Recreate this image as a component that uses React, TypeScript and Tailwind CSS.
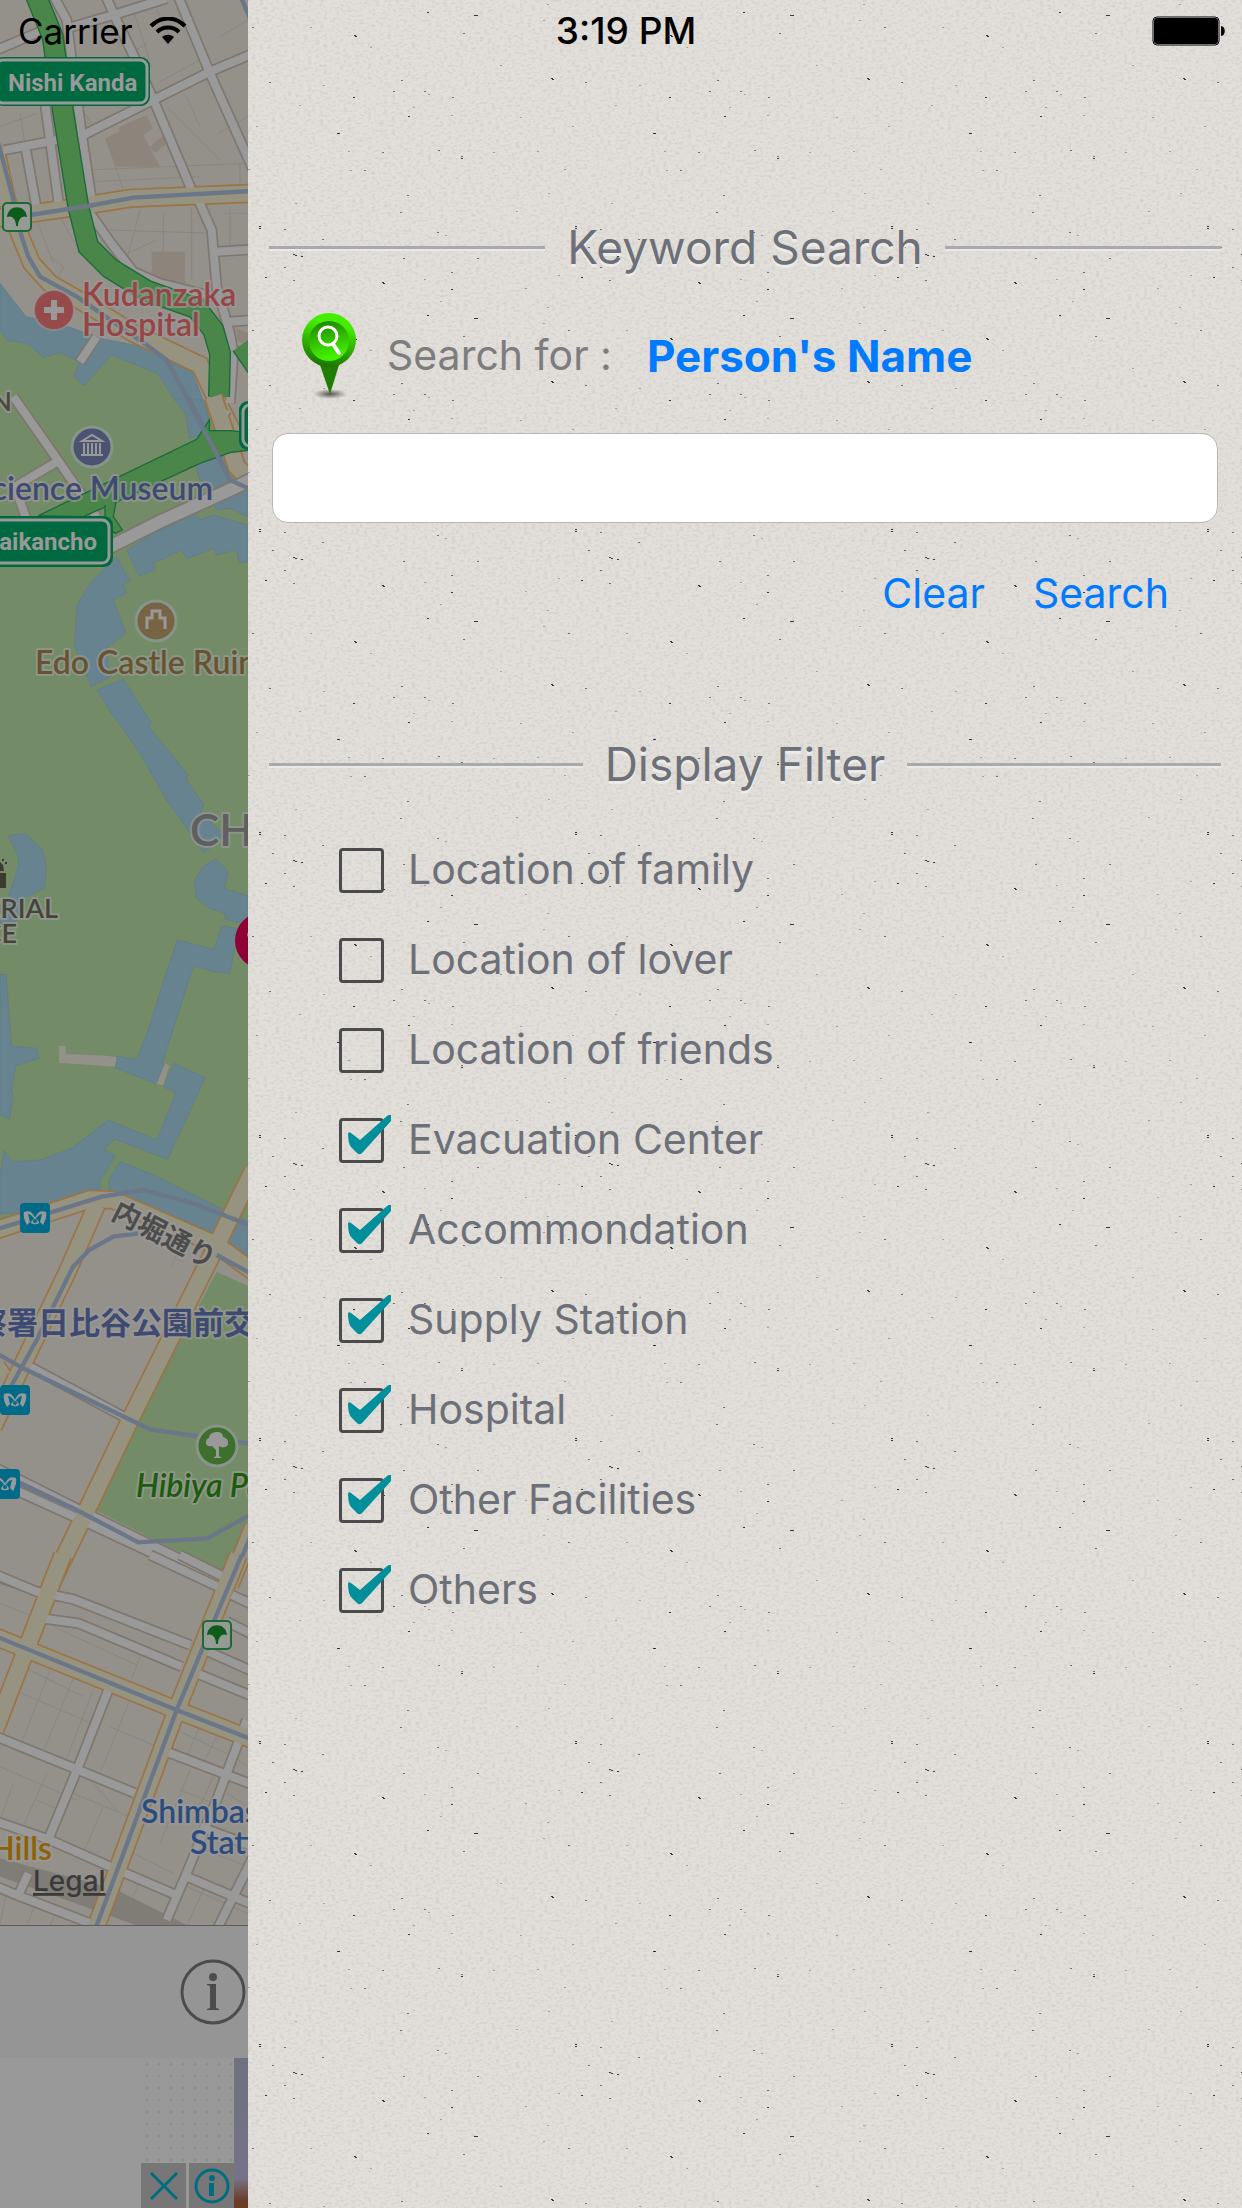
import React, { useState } from "react";

interface MapSection {
  y: number;
  park?: string[];
  water?: string[];
  land?: string[];
  building?: string[];
  street?: string[];
  avenue?: string[];
  highway?: string[];
  parcel?: string[];
  rail?: string[];
}

// Map shapes are drawn on a 744 x 5775 grid, three units to a pixel.
const sections: MapSection[] = [
  {
    y: 0,
    park: ["M0 980L20 1015 85 1030 130 1070 180 1055 240 1080 335 1060 472 1118 600 1190V1300H0z"],
    water: [
      "M0 850L78 950 165 965 300 1015 430 1040 500 1080 575 1110 610 1200 630 1260 600 1310 570 1320 555 1240 525 1200 472 1120 335 1065 252 1157 222 1130 238 1085 180 1058 130 1073 85 1032 20 1020 0 990z",
    ],
    building: [
      "M315 415L358 395 358 380 440 345 458 385 430 405 480 500 400 500 350 500z",
      "M455 755H555V855L455 835z",
      "M450 440L490 405 500 430 465 460z",
      "M710 985L744 1000V1040L710 1020z",
    ],
    parcel: [
      "M400 30L455 200M375 50L470 20M350 190L440 130M480 245L600 180M660 110L744 60M470 30L520 130M260 510L744 490M280 545L600 530M110 660L160 790M330 690L640 700M420 630L380 780M490 640V760M340 780L470 720M575 620V840M690 620V740M655 400L744 350M500 320L660 480M560 290L600 380M320 420L370 570M0 380L110 340M60 340L75 430M720 490V550M180 650L230 740M150 770L190 800 165 860M670 640L744 640M255 340L290 400",
    ],
    street: [
      "M-10 150L120 95",
      "M200 85L340 45 500 -5",
      "M318 -10L345 50 400 165 465 310 575 570",
      "M535 -10L630 220 760 510",
      "M760 160L630 215 460 300 230 415",
      "M-10 455L170 420",
      "M78 450L108 615",
      "M135 310L176 610",
      "M162 -10L200 60 215 180 248 420 275 600",
      "M595 600L635 690 650 860 690 1000 700 1060 690 1210",
      "M650 755L760 748",
      "M270 640L330 725 400 815 480 850 640 890",
      "M690 965L760 960",
      "M700 1055H760",
      "M630 1155L690 1150",
      "M290 1010L240 1085",
    ],
    avenue: [
      "M-10 655L200 625 390 595 760 580",
      "M-15 440L20 600 62 710 95 790 150 850 280 925 400 1000 600 1095 640 1180 700 1300",
    ],
    highway: ["M105 -20L158 110 190 340 235 620 265 740 330 805 440 872 590 925 640 990 660 1060 657 1190", "M725 1035L770 1100"],
    rail: ["M-5 430L40 600 65 710 85 770 120 830 230 890 440 1035 500 1080 570 1210", "M90 645L265 618 400 593 760 573", "M722 -10L750 55"],
  },
  {
    y: 1200,
    park: ["M0 0H610L744 255V2620H0z"],
    water: [
      "M525 0L555 40 570 115 600 105 628 60 610 0z",
      "M585 190L600 240 650 262 690 240 670 150z",
      "M640 310L744 270V350L690 325 650 330z",
      "M380 450L460 400 585 340 603 360 640 345 744 375V485L718 488 710 450 650 465 640 445 560 477 545 450 460 490 466 510 417 528z",
      "M350 470L390 545 368 555 380 578 340 600 378 700 318 745 330 830 275 860 223 735 230 620 270 550z",
      "M290 870L370 838 455 970 445 978 520 1070 565 1125 558 1137 612 1215 600 1235 672 1305 612 1358 500 1200 420 1060 335 940z",
    ],
    street: ["M40 -10L180 190 290 350", "M180 180L45 260 80 360", "M680 30L660 60"],
    avenue: ["M640 -10L710 200 760 250"],
    rail: ["M565 -10L690 240 760 272"],
  },
  {
    y: 2400,
    water: [
      "M25 107L75 100 128 150 140 205 133 265 70 295 45 370H0L25 290 55 200V170z",
      "M647 177L685 215 673 265 744 288V375L676 357V340L628 325 588 293 583 243 608 200z",
      "M665 378L715 385 690 520 640 515 580 498 487 790 495 795 470 852 345 803 350 768 410 778 445 690 495 530 532 420 642 448z",
      "M523 790L616 833 503 1078 345 1017 312 1048 345 1067 300 1145V1240H0V1130L12 1052 38 1085 120 1080 215 1045 325 960 470 1020 528 880 490 860z",
      "M0 523H18L35 738 110 745 117 775 47 798 35 870 40 890 28 958 0 945z",
      "M360 1085L450 1120 600 1195 744 1265V1380L640 1320 327 1200V1140z",
    ],
    land: ["M177 738H197V762L320 767 350 772 345 800 177 788z", "M495 790L508 797 490 855 470 852z"],
  },
  {
    y: 3540,
    land: ["M-10 150L270 60 340 60 650 215 744 280V1250H-10z"],
    park: ["M650 275L744 318V1030L670 1182 275 985z"],
    parcel: ["M530 225L513 260"],
    street: ["M90 560L380 715", "M-10 865L240 990 700 1215", "M-10 905L240 1018 660 1215", "M-10 1190L60 1215"],
    avenue: ["M760 -30L628 240 395 710 150 1220", "M-10 150L270 58 340 60 650 195 760 275", "M290 75L200 280 60 570 -20 740", "M-10 560L10 590", "M760 1040L690 1215"],
    rail: [
      "M-10 148L305 50 430 30 580 70 760 140",
      "M415 160L340 170 268 210 218 262 110 480 30 625",
      "M650 225L760 285",
      "M-10 520L70 565 450 748 760 793",
      "M-10 875L230 990 415 1087 620 1075 760 1000",
      "M760 1050L690 1215",
    ],
  },
  {
    y: 4680,
    park: ["M590 0H690L665 42z"],
    building: ["M0 895L130 930 340 985 570 1100H420L200 1020 0 950z"],
    parcel: [
      "M0 130L110 175M160 200L410 315M420 290L395 355M70 320L250 410M150 330L60 560M220 355L120 600M280 390L190 620M40 390L300 500M330 500L470 560M390 420L300 640M0 620L230 720M140 640L60 820M40 670L0 780M220 700L390 770M310 740L240 900M110 720L200 760M530 510L700 590M600 500L560 590M650 530L610 610M570 630L480 850M640 650L580 780M380 870L520 940M450 740L390 900M700 590L744 620M20 1000L0 1090M110 1020L80 1098M170 1050L150 1098M560 980L744 1060M610 990L560 1098M430 940L390 1030M540 690L640 730M280 670L350 750M590 860L744 920M680 700L744 740",
    ],
    street: [
      "M-10 45L110 95 220 118 570 255",
      "M125 175L235 190 545 320",
      "M450 -15L665 85",
      "M540 -15L680 55",
      "M695 105L760 135",
      "M680 185L760 225",
      "M625 275L760 335",
      "M590 340L760 410",
      "M325 390L235 620 140 850",
      "M-10 530L235 630 405 700",
      "M-10 785L150 840 330 920 540 1010",
      "M500 575L760 675",
      "M740 480L650 720 560 940 500 1080",
      "M560 950L760 1035",
      "M760 890L650 1110",
      "M-10 980L50 1005 270 1090",
      "M55 1005L85 940",
      "M600 800L760 860",
    ],
    avenue: ["M188 -15L20 420 -15 510", "M-10 232L530 450 760 540", "M715 -15L530 450 400 800 285 1110"],
    rail: ["M-10 230L530 450 760 540", "M725 -15L530 450 285 1110"],
  },
];

const Paths: React.FC<{ list?: string[]; className: string }> = ({ list = [], className }) => (
  <>
    {list.map((d, i) => (
      <path key={i} d={d} className={className} />
    ))}
  </>
);

const MetroIcon: React.FC<{ x: number; y: number }> = ({ x, y }) => (
  <g transform={`translate(${x} ${y})`}>
    <rect width="30" height="30" rx="4" className="fill-[#006b88]" />
    <path d="M4 9C9 7 12 9 14 13L19 19C20 22 10 22 11 19L16 13C18 9 21 7 26 9C27 14 25 18 23 22L20 19 22 11C18 11 18 15 15 15C12 15 12 11 8 11L10 19 7 22C5 18 3 14 4 9z" className="fill-[#999]" />
    <circle cx="15" cy="18" r="2" className="fill-[#006b88]" />
  </g>
);

const GinkgoIcon: React.FC<{ x: number; y: number }> = ({ x, y }) => (
  <g transform={`translate(${x} ${y})`}>
    <rect x="1" y="1" width="28" height="28" rx="4" className="fill-[#959a94] stroke-[#1b6a35] stroke-2" />
    <path d="M5 15C6 2 24 2 25 15C21 13 16 16 16 24H14C14 16 9 13 5 15z" className="fill-[#0e5c1c]" />
  </g>
);

const mapLabel = "[paint-order:stroke] stroke-[#999999b0] stroke-4 [stroke-linejoin:round]";

const CityMap: React.FC = () => (
  <svg viewBox="0 0 248 1925" preserveAspectRatio="xMinYMin slice" className="block min-h-0 w-full flex-1 bg-[#94918b]" role="img" aria-label="Map">
    <g transform="scale(0.33333)">
      {sections.map((s) => (
        <g key={s.y} transform={`translate(0 ${s.y})`}>
          {s.y !== 3540 && <Paths list={s.park} className="fill-[#738b67]" />}
          <Paths list={s.water} className="fill-[#66838f] stroke-[#5d7c8c] stroke-2" />
          <Paths list={s.land} className="fill-[#94918b]" />
          {s.y === 3540 && <Paths list={s.park} className="fill-[#738b67]" />}
          <Paths list={s.building} className={s.y === 4680 ? "fill-[#807d77]" : "fill-[#8d857c]"} />
          <Paths list={s.parcel} className="fill-none stroke-[#83817b] stroke-2" />
          <Paths list={s.street} className="fill-none stroke-[#7f766e] stroke-[34px]" />
          <Paths list={s.avenue} className="fill-none stroke-[#9b7344] stroke-[58px]" />
          <Paths list={s.street} className="fill-none stroke-[#999] stroke-[24px]" />
          <Paths list={s.avenue} className="fill-none stroke-[#969380] stroke-[48px]" />
          <Paths list={s.highway} className="fill-none stroke-[#1b6a3a] stroke-[66px]" />
          <Paths list={s.highway} className="fill-none stroke-[#4a854a] stroke-[58px]" />
          <Paths list={s.rail} className="fill-none stroke-[#6b7788] stroke-[13px]" />
        </g>
      ))}
      <g transform="translate(0 1200)">
        <path d="M115 347L590 118 628 60V92L695 92 750 100V150L690 158 600 190 340 310 250 350z" className="fill-[#4a854a] stroke-[#1b6a3a] stroke-4" />
        <path d="M315 315V370L345 400 367 390 340 350 348 305" className="fill-[#4a854a] stroke-[#1b6a3a] stroke-4" />
        <path d="M320 445L480 365 700 265 760 235" className="fill-none stroke-[#7f766e] stroke-[46px]" />
        <path d="M320 445L480 365 700 265 760 235" className="fill-none stroke-[#999] stroke-[36px]" />
        <path d="M565 0L690 240 760 272" className="fill-none stroke-[#6b7788] stroke-[13px]" />
      </g>
      <circle cx="790" cy="2822" r="85" className="fill-[#8e0036]" />
      <path d="M744 2795A18 18 0 0 0 744 2812z" className="fill-[#999]" />
    </g>

    <g className="font-[Roboto,sans-serif] text-[24px] font-bold">
      <rect x="-6" y="57" width="156" height="49" rx="9" className="fill-[#006940]" />
      <rect x="-4" y="60" width="151" height="43" rx="7" className="fill-none stroke-[#999] stroke-3" />
      <text x="8" y="91" className="fill-[#999]">Nishi Kanda</text>
      <rect x="-8" y="516" width="121" height="51" rx="9" className="fill-[#006940]" />
      <rect x="-6" y="520" width="115" height="43" rx="7" className="fill-none stroke-[#999] stroke-3" />
      <text x="97" y="550" textAnchor="end" className="fill-[#999]">Daikancho</text>
      <rect x="239" y="401" width="40" height="49" rx="9" className="fill-[#006940]" />
      <rect x="243" y="405" width="40" height="41" rx="7" className="fill-none stroke-[#999] stroke-3" />
    </g>

    <GinkgoIcon x={2} y={202} />
    <GinkgoIcon x={202} y={1620} />
    <MetroIcon x={20} y={1203} />
    <MetroIcon x={0} y={1385} />
    <MetroIcon x={-10} y={1469} />

    <circle cx="54" cy="310" r="20" className="fill-[#964a4a] stroke-[#999999a0] stroke-2" />
    <path d="M54 300V320M44 310H64" className="stroke-[#999] stroke-6" />
    <circle cx="92" cy="447" r="20" className="fill-[#4a5472] stroke-[#87948a] stroke-3" />
    <path d="M82 441L92 435 102 441zM84 443V455M88 443V455M92 443V455M96 443V455M100 443V455M81 455H103" className="fill-none stroke-[#999] stroke-2" />
    <circle cx="156" cy="621" r="20" className="fill-[#776444] stroke-[#87948a] stroke-3" />
    <path d="M147 629V618H152V611H160V618H165V629" className="fill-none stroke-[#999] stroke-3" />
    <circle cx="217" cy="1446" r="20" className="fill-[#3f6f2c] stroke-[#87948a] stroke-3" />
    <path d="M217 1432C221 1432 223 1434 223 1437C229 1438 230 1446 225 1447C223 1448 220 1447 219 1446V1456L222 1458H213L216 1456V1450L212 1446C205 1448 204 1440 209 1438C209 1434 213 1432 217 1432z" className="fill-[#999]" />
    <path d="M0 873H6V888H0zM0 862L3 865 4 871H0zM5 862h2v2H5zM2 859h2v2H2z" className="fill-[#3d3a30]" />

    <g className="font-[Lato,sans-serif] text-[32px] font-semibold">
      <text className={`${mapLabel} fill-[#984444]`}>
        <tspan x="82" y="306">Kudanzaka</tspan>
        <tspan x="82" y="336">Hospital</tspan>
      </text>
      <text x="213" y="500" textAnchor="end" className={`${mapLabel} fill-[#3e4a72]`}>Science Museum</text>
      <text x="35" y="674" className={`${mapLabel} fill-[#665430]`}>Edo Castle Ruins</text>
      <text x="12" y="411" textAnchor="end" className={`${mapLabel} fill-[#4b483c] text-[27px]`}>N</text>
      <text x="190" y="846" className={`${mapLabel} fill-[#5f5f5f] text-[44px]`}>CHIYODA</text>
      <text textAnchor="end" className={`${mapLabel} fill-[#464437] text-[27px]`}>
        <tspan x="58" y="918">IMPERIAL</tspan>
        <tspan x="17" y="943">PALACE</tspan>
      </text>
      <text x="136" y="1497" className={`${mapLabel} fill-[#1d5c0c] italic`}>Hibiya Park</text>
      <text className={`${mapLabel} fill-[#2c4c7e]`}>
        <tspan x="141" y="1823">Shimbashi</tspan>
        <tspan x="190" y="1854">Station</tspan>
      </text>
      <text x="52" y="1860" textAnchor="end" className={`${mapLabel} fill-[#8c6108]`}>Hills</text>
    </g>
    <g className="font-['Noto_Sans_CJK_JP',sans-serif] font-bold">
      <text x="110" y="1218" transform="rotate(27 110 1218)" className={`${mapLabel} fill-[#4c4c4c] text-[28px]`}>内堀通り</text>
      <text x="-24" y="1334" className={`${mapLabel} fill-[#3e4a72] text-[31px]`}>察署日比谷公園前交差点</text>
    </g>
    <a href="#legal">
      <text x="33" y="1891" className="fill-[#3a3a3a] font-[Inter,sans-serif] text-[28px] font-medium underline">Legal</text>
    </a>
  </svg>
);

// x, y and strength of each fleck in one 316 x 303 paper tile
const flecks: [number, number, number][] = [
  [150, 22, 2], [45, 13, 1], [9, 36, 3], [9, 38, 3], [34, 39, 2], [72, 49, 2], [187, 42, 2], [195, 45, 1],
  [22, 57, 2], [43, 64, 3], [45, 65, 3], [51, 66, 3], [153, 68, 2], [227, 68, 2], [34, 77, 2], [15, 87, 3],
  [43, 90, 2], [201, 82, 2], [201, 99, 3], [132, 92, 3], [133, 93, 3], [177, 125, 3], [224, 128, 3], [226, 128, 3],
  [213, 146, 2], [2, 140, 2], [104, 148, 3], [105, 149, 3], [301, 191, 3], [302, 192, 3], [19, 195, 2],
  [151, 193, 2], [143, 204, 2], [174, 204, 2], [178, 207, 1], [202, 210, 2], [103, 210, 3], [158, 229, 3],
  [49, 218, 1], [87, 246, 3], [88, 246, 3], [132, 265, 2], [98, 264, 1], [188, 263, 2], [211, 269, 2], [211, 271, 3],
  [243, 265, 1], [287, 264, 1], [114, 283, 2], [314, 282, 1], [100, 283, 1], [157, 5, 2], [298, 3, 1], [266, 21, 1],
  [308, 85, 1], [293, 133, 1], [190, 111, 1], [174, 89, 1], [163, 220, 1], [201, 228, 1], [275, 98, 1], [297, 117, 1],
  [6, 239, 1], [73, 198, 1], [250, 178, 1], [120, 160, 1], [60, 140, 1], [270, 230, 1],
];

const Paper: React.FC = () => (
  <svg className="absolute inset-0 size-full" aria-hidden="true">
    <defs>
      <filter id="grain" x="0" y="0" width="100%" height="100%">
        <feTurbulence type="fractalNoise" baseFrequency="0.25 0.4" numOctaves="3" seed="4" />
        <feColorMatrix values="0 0 0 0 0.5  0 0 0 0 0.48  0 0 0 0 0.45  2 0 0 0 -0.9" />
      </filter>
      <pattern id="flecks" x="2" y="190" width="316" height="303" patternUnits="userSpaceOnUse">
        {flecks.map(([x, y, s], i) => (
          <rect key={i} x={x} y={y} width="2" height="1" opacity={s === 3 ? 0.85 : s === 2 ? 0.55 : 0.3} className="fill-[#1c1a18]" />
        ))}
      </pattern>
    </defs>
    <rect width="100%" height="100%" className="fill-[#e2dfda]" />
    <rect width="100%" height="100%" filter="url(#grain)" opacity="0.5" />
    <rect width="100%" height="100%" fill="url(#flecks)" />
  </svg>
);

const PinIcon: React.FC = () => (
  <svg viewBox="0 0 54 88" className="h-[88px] w-[54px]" aria-hidden="true">
    <defs>
      <linearGradient id="pinOuter" x1="0.6" y1="0" x2="0.4" y2="1">
        <stop offset="0.2" stopColor="#44ee00" />
        <stop offset="1" stopColor="#1c7000" />
      </linearGradient>
      <linearGradient id="pinInner" x1="0.4" y1="0" x2="0.6" y2="1">
        <stop offset="0" stopColor="#1f8a00" />
        <stop offset="0.9" stopColor="#44f200" />
      </linearGradient>
      <radialGradient id="pinShadow">
        <stop offset="0" stopColor="#333" stopOpacity="0.8" />
        <stop offset="1" stopColor="#333" stopOpacity="0" />
      </radialGradient>
    </defs>
    <ellipse cx="28" cy="82" rx="17" ry="5" fill="url(#pinShadow)" />
    <path d="M18 53H37L28 82z" className="fill-[#1f7d00]" />
    <circle cx="27" cy="28" r="27" fill="url(#pinOuter)" />
    <circle cx="27" cy="29" r="20" fill="url(#pinInner)" />
    <circle cx="26" cy="24" r="9" className="fill-none stroke-white stroke-3" />
    <path d="M31 32L37 41" className="stroke-white stroke-4 [stroke-linecap:round]" />
  </svg>
);

const SectionTitle: React.FC<{ children: React.ReactNode }> = ({ children }) => (
  <div className="flex items-center gap-[22px]">
    <span className="h-[3px] flex-1 bg-[#aaa] shadow-[0_2px_0_#ebe9e6]" />
    <h2 className="text-[46px] leading-[60px] text-[#6d7078] [text-shadow:0_3px_0_#ecebe8]">{children}</h2>
    <span className="h-[3px] flex-1 bg-[#aaa] shadow-[0_2px_0_#ebe9e6]" />
  </div>
);

interface FilterItem {
  label: string;
  checked: boolean;
}

const initialFilters: FilterItem[] = [
  { label: "Location of family", checked: false },
  { label: "Location of lover", checked: false },
  { label: "Location of friends", checked: false },
  { label: "Evacuation Center", checked: true },
  { label: "Accommondation", checked: true },
  { label: "Supply Station", checked: true },
  { label: "Hospital", checked: true },
  { label: "Other Facilities", checked: true },
  { label: "Others", checked: true },
];

const StatusBar: React.FC = () => (
  <header className="absolute inset-x-0 top-0 z-10 grid h-[62px] grid-cols-3 items-center pr-2 pl-[18px] text-black">
    <div className="flex items-center gap-4 text-[35px]">
      <span>Carrier</span>
      <svg viewBox="0 0 38 28" className="h-7 w-[38px]" aria-label="Wi-Fi">
        <path d="M2 9C12 -1 26 -1 36 9M8 15C14 9 24 9 30 15" className="fill-none stroke-black stroke-4" />
        <path d="M13 20C17 17 21 17 25 20L19 27z" />
      </svg>
    </div>
    <span className="text-center text-[37px] font-medium">3:19 PM</span>
    <svg viewBox="0 0 74 30" className="mr-2 h-[30px] w-[74px] justify-self-end" aria-label="Battery full">
      <rect x="1" y="1" width="66" height="28" rx="4" className="fill-none stroke-black stroke-1" />
      <rect x="2" y="2" width="64" height="26" rx="3" />
      <path d="M69 10C74 10 74 20 69 20z" />
    </svg>
  </header>
);

const App: React.FC = () => {
  const [keyword, setKeyword] = useState("");
  const [filters, setFilters] = useState(initialFilters);

  const toggle = (index: number) => {
    setFilters(filters.map((f, i) => (i === index ? { ...f, checked: !f.checked } : f)));
  };

  return (
    <div className="relative flex min-h-screen font-[Inter,sans-serif]">
      <StatusBar />

      <aside className="flex h-screen w-62 shrink-0 flex-col overflow-hidden">
        <CityMap />
        <div className="flex h-[133px] items-center justify-end border-t border-[#5c5c5a] bg-[#959595] pr-0.5">
          <button aria-label="Information">
            <svg viewBox="0 0 66 66" className="size-[66px]">
              <circle cx="33" cy="33" r="31" className="fill-none stroke-[#4c4c4c] stroke-3" />
              <circle cx="33" cy="18" r="4" className="fill-[#4c4c4c]" />
              <path d="M27 25H36V49L39 50V51H27V50L30 49V27L27 26z" className="fill-[#4c4c4c]" />
            </svg>
          </button>
        </div>
        <div className="flex h-[150px] justify-end bg-[#999]">
          <div className="flex items-end gap-[3px] bg-[radial-gradient(#8f9085_1px,transparent_2px)] bg-[size:12px_12px]">
            <button className="flex size-[45px] items-center justify-center bg-[#777]" aria-label="Close ad">
              <svg viewBox="0 0 28 28" className="size-7">
                <path d="M1 1L27 27M27 1L1 27" className="stroke-[#006c80] stroke-3" />
              </svg>
            </button>
            <button className="flex size-[45px] items-center justify-center bg-[#777]" aria-label="Ad choices">
              <svg viewBox="0 0 36 36" className="size-9">
                <circle cx="18" cy="18" r="16" className="fill-none stroke-[#006c80] stroke-3" />
                <circle cx="18" cy="10" r="3" className="fill-[#006c80]" />
                <path d="M15 15H20V28H15z" className="fill-[#006c80]" />
              </svg>
            </button>
          </div>
          <div className="w-3.5 bg-linear-to-b from-[#6d7180] from-0% via-[#77728a] via-80% to-[#6b3c26] to-95%" />
        </div>
      </aside>

      <main className="relative flex-1">
        <Paper />
        <div className="relative px-[21px] pt-[217px]">
          <SectionTitle>Keyword Search</SectionTitle>

          <div className="mt-[35px] flex items-center pl-[33px]">
            <PinIcon />
            <label htmlFor="keyword" className="ml-[31px] text-[41px] text-[#7d7d7d]">
              Search for :
            </label>
            <button className="ml-[35px] text-[44px] font-bold text-[#007aff]">Person's Name</button>
          </div>

          <div className="mt-[33px] px-[3px]">
            <input
              id="keyword"
              type="text"
              value={keyword}
              onChange={(e) => setKeyword(e.target.value)}
              className="h-[90px] w-full rounded-2xl border border-[#b8b7b5] bg-white px-5 text-[41px] outline-none"
            />
          </div>

          <div className="mt-10 flex justify-end gap-12 pr-[52px] text-[41px] leading-[60px] text-[#007aff]">
            <button onClick={() => setKeyword("")}>Clear</button>
            <button>Search</button>
          </div>

          <div className="mt-[111px]">
            <SectionTitle>Display Filter</SectionTitle>
          </div>

          <ul className="mt-[31px] pl-[70px]">
            {filters.map((item, index) => (
              <li key={item.label}>
                <label className="flex h-[90px] items-center gap-6 text-[41px] text-[#6d7078]">
                  <span className="relative flex">
                    <input
                      type="checkbox"
                      checked={item.checked}
                      onChange={() => toggle(index)}
                      className="size-[45px] appearance-none rounded border-3 border-[#4b4b4b]"
                    />
                    {item.checked && (
                      <svg viewBox="0 0 53 48" className="pointer-events-none absolute -top-[3px] left-0 h-12 w-[53px]" aria-hidden="true">
                        <path d="M9 19Q9 16 12 18L21 25 47 2Q50 -1 52 0V6L24 37Q21 41 18 38L12 32Q9 28 9 19z" className="fill-[#008f9b]" />
                      </svg>
                    )}
                  </span>
                  {item.label}
                </label>
              </li>
            ))}
          </ul>
        </div>
      </main>
    </div>
  );
};

export default App;
